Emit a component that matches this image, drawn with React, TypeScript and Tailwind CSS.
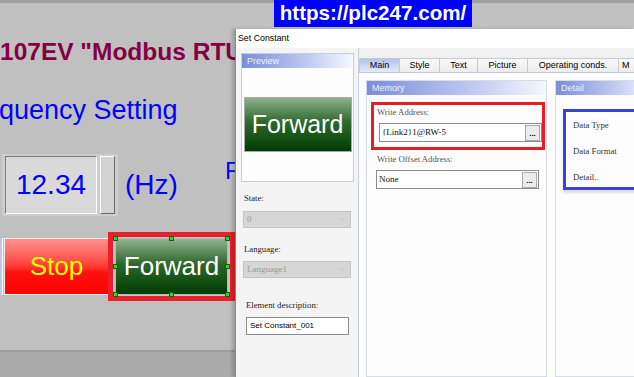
import React from "react";
import { ChevronDown } from "lucide-react";

// HMIエディタ画面 + 「Set Constant」ダイアログ

const PanelHeader: React.FC<{ title: string }> = ({ title }) => (
  <div className="flex h-[14px] items-center bg-linear-to-r from-[#7a8ed8] via-[#b4c0ee] to-[#f6f8ff] pl-[5px] text-[9px] leading-none text-[#eef2ff]">
    {title}
  </div>
);

const Label: React.FC<{ children: React.ReactNode; className?: string }> = ({
  children,
  className = "",
}) => (
  <div
    className={`font-['Liberation_Serif',serif] text-[8.7px] leading-[9px] text-[#222] ${className}`}
  >
    {children}
  </div>
);

const DisabledSelect: React.FC<{ value: string; className?: string }> = ({
  value,
  className = "",
}) => (
  <div
    className={`flex h-[17px] w-[108px] items-center justify-between border border-[#c4c4c4] bg-[#d6d6d6] pl-[3px] pr-[4px] ${className}`}
  >
    <span className="font-['Liberation_Serif',serif] text-[9px] leading-none text-[#9a9a9a]">
      {value}
    </span>
    <ChevronDown size={9} strokeWidth={1.2} color="#a8a8a8" />
  </div>
);

const AddressInput: React.FC<{ value: string; className?: string }> = ({
  value,
  className = "",
}) => (
  <div
    className={`flex h-[19px] w-[163px] items-center justify-between border border-[#8c8c8c] bg-white pl-[2px] pr-[1px] ${className}`}
  >
    <span className="font-['Liberation_Serif',serif] text-[9px] leading-none text-[#111]">
      {value}
    </span>
    <div className="flex h-[16px] w-[15px] items-end justify-center border border-[#a8a8a8] bg-[#ececec] pb-[2px] text-[8px] font-bold leading-none text-black">
      ...
    </div>
  </div>
);

const Handle: React.FC<{ className: string }> = ({ className }) => (
  <div
    className={`absolute h-[5px] w-[5px] border border-[#1a5a1a] bg-[#22e022] ${className}`}
  />
);

const tabs = [
  { name: "Main", w: "w-[41px]", active: true },
  { name: "Style", w: "w-[40px]", active: false },
  { name: "Text", w: "w-[38px]", active: false },
  { name: "Picture", w: "w-[50px]", active: false },
  { name: "Operating conds.", w: "w-[91px]", active: false },
];

const SetConstantDialog: React.FC = () => (
  <div className="absolute left-[235px] top-[29px] flex h-[348px] w-[399px] flex-col border-l border-[#8a8a8a] bg-[#f0f0f0] font-['Liberation_Sans',Arial,sans-serif] shadow-[-3px_0_3px_rgba(0,0,0,0.18)]">
    {/* タイトルバー */}
    <div className="flex h-[19px] items-center bg-white pl-[2px] text-[8.8px] leading-none text-black">
      Set Constant
    </div>

    <div className="flex flex-1 overflow-hidden">
      {/* 左カラム: プレビュー */}
      <div className="w-[123px] shrink-0 border-r border-[#c8d0dc] bg-[#f4f4f4] pl-[5px] pt-[5px]">
        <div className="flex h-[129px] w-[113px] flex-col border border-[#c4d0e0] bg-[#fdfdfd]">
          <PanelHeader title="Preview" />
          <div className="flex flex-1 items-center justify-center">
            <div className="flex h-[55px] w-[108px] items-center justify-center border border-[#a8a8a8] bg-linear-to-b from-[#8fb08f] via-[#2d6a2d] via-45% to-[#003c00] text-[25px] leading-none text-white">
              Forward
            </div>
          </div>
        </div>

        <Label className="ml-[3px] mt-[12px]">State:</Label>
        <DisabledSelect value="0" className="ml-[2px] mt-[8px]" />

        <Label className="ml-[3px] mt-[17px]">Language:</Label>
        <DisabledSelect value="Language1" className="ml-[2px] mt-[7px]" />

        <Label className="ml-[5px] mt-[23px]">Element description:</Label>
        <div className="ml-[5px] mt-[7px] flex h-[18px] w-[103px] items-center border border-[#8c8c8c] bg-white pl-[3px] text-[8px] leading-none text-black">
          Set Constant_001
        </div>
      </div>

      {/* 右カラム: タブ */}
      <div className="flex min-w-0 flex-1 flex-col pt-[10px]">
        <div className="flex h-[14px] shrink-0">
          {tabs.map((t, i) => (
            <div
              key={t.name}
              className={`flex h-full shrink-0 items-center justify-center border-t border-r border-[#c4cad6] text-[9px] leading-none text-black ${t.w} ${
                i === 0 ? "border-l" : ""
              } ${
                t.active
                  ? "bg-linear-to-b from-[#b2c2ec] to-[#e4eaf8]"
                  : "bg-linear-to-b from-[#fafafa] to-[#ececec]"
              }`}
            >
              {t.name}
            </div>
          ))}
          <div className="flex h-full w-[20px] shrink-0 items-center border-t border-[#c4cad6] bg-linear-to-b from-[#fafafa] to-[#ececec] pl-[3px] text-[9px] leading-none text-black">
            M
          </div>
        </div>

        <div className="flex flex-1 gap-[8px] overflow-hidden border-t border-[#c4cad6] bg-[#fcfcfc] pl-[7px] pt-[7px]">
          {/* Memory */}
          <div className="w-[181px] shrink-0 border border-[#d8dce6] bg-[#fcfcfc]">
            <PanelHeader title="Memory" />
            <div className="ml-[4px] mt-[7px] w-[174px] border-[3px] border-[#e41e26] pb-[5px] pl-[3px] pt-[3px]">
              <Label className="text-[#555]">Write Address:</Label>
              <AddressInput value="{Link2}1@RW-5" className="ml-[2px] mt-[6px]" />
            </div>
            <Label className="ml-[10px] mt-[5px] text-[#555]">Write Offset Address:</Label>
            <AddressInput value="None" className="ml-[9px] mt-[6px]" />
          </div>

          {/* Detail */}
          <div className="w-[100px] shrink-0 border border-[#d8dce6] bg-[#fcfcfc]">
            <PanelHeader title="Detail" />
            <div className="ml-[7px] mt-[14px] flex flex-col gap-[17px] border-[3px] border-[#3a44d0] pb-[5px] pl-[7px] pt-[9px] shadow-[0_3px_2px_rgba(0,0,0,0.12)]">
              <Label className="text-[#333]">Data Type</Label>
              <Label className="text-[#333]">Data Format</Label>
              <Label className="text-[#333]">Detail..</Label>
            </div>
          </div>
        </div>
      </div>
    </div>
  </div>
);

const App: React.FC = () => {
  return (
    <div className="relative h-[377px] w-[634px] overflow-hidden bg-[#c0c0c0] font-['Liberation_Sans',Arial,sans-serif]">
      <div className="flex h-full flex-col">
        <div className="h-[3px] shrink-0 bg-[#a0a0a0]" />

        {/* HMI 画面 (右側はダイアログの下に隠れる) */}
        <div className="w-[235px] flex-1 overflow-hidden">
          <div className="mt-[37px] whitespace-nowrap text-[24.5px] font-bold leading-none text-[#850040]">
            107EV "Modbus RTU"
          </div>
          <div className="ml-[-1px] mt-[32px] whitespace-nowrap text-[27px] leading-none text-[#0000ff]">
            quency Setting
          </div>

          {/* 数値入力 */}
          <div className="mt-[30px] flex h-[62px] items-center">
            <div className="ml-[2px] flex h-[62px] w-[116px] gap-[3px] bg-[#cdcdcd] px-[3px] py-[2px]">
              <div className="flex w-[92px] items-center justify-center border border-t-[#7c7c7c] border-l-[#7c7c7c] border-r-white border-b-white bg-[#d9d9d9] text-[28px] leading-none text-[#0000ff]">
                12.34
              </div>
              <div className="w-[15px] border border-t-white border-l-white border-r-[#6a6a6a] border-b-[#6a6a6a] bg-[#d2d2d2]" />
            </div>
            <div className="ml-[7px] text-[28px] leading-none text-[#0000ff]">(Hz)</div>
            <div className="ml-[47px] mt-[5px] self-start text-[24px] leading-none text-[#0000ff]">F</div>
          </div>

          {/* ボタン */}
          <div className="mt-[16px] flex h-[69px] items-center">
            <div className="h-[57px] w-[3px] border-r border-white bg-[#c4c6e4]" />
            <div className="ml-px flex h-[57px] w-[106px] items-center justify-center border border-[#eeeef4] bg-linear-to-b from-[#ff8e8e] via-[#ff1010] via-60% to-[#ff0000] text-[26px] leading-none text-[#ffff00]">
              Stop
            </div>
            <div className="relative -ml-px h-[69px] w-[127px] shrink-0 border-[5px] border-[#e8202a] bg-[#c4c4c4] px-[2px] py-[1px]">
              <div className="flex h-[57px] w-[113px] items-center justify-center border border-[#b8b8b8] bg-linear-to-b from-[#93b393] via-[#2c682c] via-45% to-[#003d00] text-[26px] leading-none text-white">
                Forward
              </div>
              <Handle className="left-[0px] top-[-1px]" />
              <Handle className="left-[56px] top-[-1px]" />
              <Handle className="left-[112px] top-[-1px]" />
              <Handle className="left-[0px] top-[27px]" />
              <Handle className="left-[112px] top-[27px]" />
              <Handle className="left-[0px] top-[55px]" />
              <Handle className="left-[56px] top-[55px]" />
              <Handle className="left-[112px] top-[55px]" />
            </div>
          </div>
        </div>

        <div className="h-[27px] shrink-0 border-t-2 border-[#9c9c9c] bg-[#aaaaaa]" />
      </div>

      {/* URL バナー */}
      <div className="absolute left-[274px] top-0 flex h-[27px] w-[198px] items-center justify-center bg-[#0000ff] text-[20.6px] font-bold leading-none text-white">
        https://plc247.com/
      </div>

      <SetConstantDialog />
    </div>
  );
};

export default App;
